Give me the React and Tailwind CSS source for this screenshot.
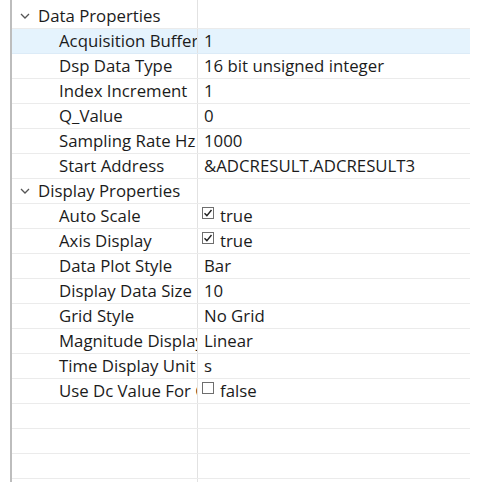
import React from 'react';

const groups = [
  {
    name: 'Data Properties',
    rows: [
      ['Acquisition Buffer', '1'],
      ['Dsp Data Type', '16 bit unsigned integer'],
      ['Index Increment', '1'],
      ['Q_Value', '0'],
      ['Sampling Rate Hz', '1000'],
      ['Start Address', '&ADCRESULT.ADCRESULT3'],
    ],
  },
  {
    name: 'Display Properties',
    rows: [
      ['Auto Scale', true],
      ['Axis Display', true],
      ['Data Plot Style', 'Bar'],
      ['Display Data Size', '10'],
      ['Grid Style', 'No Grid'],
      ['Magnitude Display Scale', 'Linear'],
      ['Time Display Unit', 's'],
      ['Use Dc Value For Graph', false],
    ],
  },
];

function Chevron() {
  return (
    <svg width="10" height="6" viewBox="0 0 10 6" className="shrink-0">
      <path d="M1 1l4 4 4-4" fill="none" stroke="#555" strokeWidth="1.3" />
    </svg>
  );
}

function CheckBox({ checked }) {
  return (
    <span className="mt-[3px] w-[12px] h-[12px] border border-[#6e6e6e] bg-white flex items-center justify-center shrink-0">
      {checked && (
        <svg width="10" height="10" viewBox="0 0 10 10">
          <path d="M1.5 5.2l2.4 2.4 4.6-5.6" fill="none" stroke="#222" strokeWidth="1.4" />
        </svg>
      )}
    </span>
  );
}

function Value({ v }) {
  if (typeof v === 'boolean') {
    return (
      <div className="flex items-start h-full pl-[4px] gap-[6px]">
        <CheckBox checked={v} />
        <span className="self-center">{v ? 'true' : 'false'}</span>
      </div>
    );
  }
  return <div className="flex items-center h-full pl-[6px]">{v}</div>;
}

export default function App() {
  return (
    <div
      className="w-[477px] h-[482px] bg-white overflow-hidden flex pl-[10px] text-[16.8px] leading-[24px] text-[#1b1b1b]"
      style={{ fontFamily: '"Open Sans", "Noto Sans", sans-serif' }}
    >
      <div className="w-[2px] bg-[#bdbdbd] shrink-0" />
      <div className="w-[458px] flex flex-col">
        <div className="h-[4px] flex shrink-0">
          <div className="w-[186px] border-r border-[#e2e2e2]" />
        </div>

        {groups.map((g) => (
          <React.Fragment key={g.name}>
            <div className="flex h-[25px] shrink-0 border-b border-[#ebebeb]">
              <div className="w-[186px] border-r border-[#e2e2e2] flex items-center pl-[8px] gap-[8px] whitespace-nowrap overflow-hidden">
                <Chevron />
                <span>{g.name}</span>
              </div>
              <div className="flex-1" />
            </div>
            {g.rows.map(([label, v], i) => (
              <div
                key={label}
                className={`flex h-[25px] shrink-0 border-b ${g.name === 'Data Properties' && i === 0 ? 'bg-[#e5f3fd] border-[#dcebf7]' : 'border-[#ebebeb]'}`}
              >
                <div className="w-[186px] border-r border-[#e2e2e2] flex items-center pl-[47px] whitespace-nowrap overflow-hidden">
                  {label}
                </div>
                <div className="flex-1 whitespace-nowrap overflow-hidden">
                  <Value v={v} />
                </div>
              </div>
            ))}
          </React.Fragment>
        ))}

        {[0, 1, 2, 3].map((n) => (
          <div key={n} className="flex h-[25px] shrink-0 border-b border-[#ebebeb]">
            <div className="w-[186px] border-r border-[#e2e2e2]" />
            <div className="flex-1" />
          </div>
        ))}
      </div>
    </div>
  );
}
